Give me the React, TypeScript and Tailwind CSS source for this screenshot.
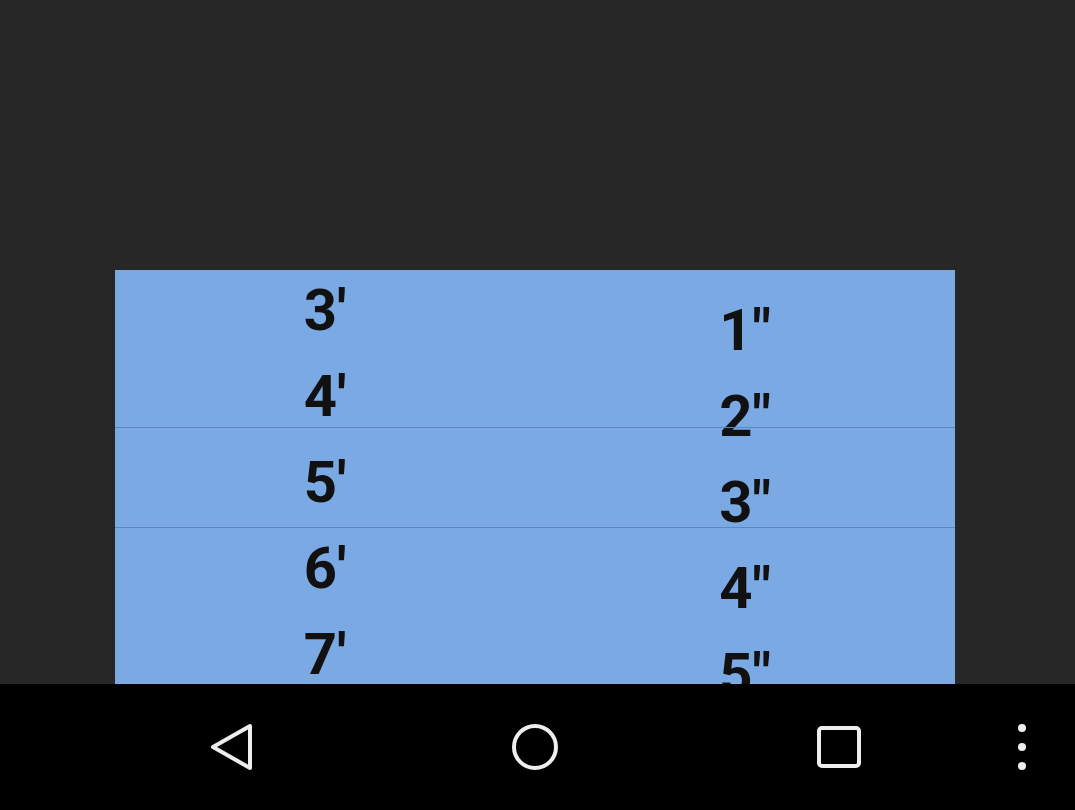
import React from "react";

const feet = ["3'", "4'", "5'", "6'", "7'"];
const inches = ['1"', '2"', '3"', '4"', '5"'];

function Column({ items, offset }: { items: string[]; offset: string }) {
  return (
    <div className={`flex flex-1 flex-col items-center ${offset}`}>
      {items.map((v) => (
        <div key={v} className="h-[86px] shrink-0 text-[58px] font-bold leading-[86px] text-[#111111]">
          {v}
        </div>
      ))}
    </div>
  );
}

export default function App() {
  return (
    <div
      className="flex h-[810px] w-full flex-col bg-[#272727]"
      style={{ fontFamily: "Roboto, 'Liberation Sans', sans-serif" }}
    >
      {/* picker area */}
      <div className="flex-1 pl-[115px] pr-[120px] pt-[270px]">
        <div className="relative flex h-[414px] overflow-hidden bg-[#7ba9e4]">
          <Column items={feet} offset="mt-[-3px]" />
          <Column items={inches} offset="mt-[17px]" />
          <div className="absolute left-0 right-0 top-[157px] h-px bg-[#5b86c0]" />
          <div className="absolute left-0 right-0 top-[257px] h-px bg-[#5b86c0]" />
        </div>
      </div>

      {/* nav bar */}
      <div className="flex h-[126px] items-center bg-black pl-[79px]">
        <div className="flex w-[304px] justify-center">
          <svg width="50" height="50" viewBox="0 0 50 50" fill="none" stroke="#eeeeee" strokeWidth="4" strokeLinejoin="round">
            <path d="M7 25 L44 4 L44 46 Z" />
          </svg>
        </div>
        <div className="flex w-[304px] justify-center">
          <svg width="50" height="50" viewBox="0 0 50 50" fill="none" stroke="#eeeeee" strokeWidth="4">
            <circle cx="25" cy="25" r="21" />
          </svg>
        </div>
        <div className="flex w-[304px] justify-center">
          <svg width="50" height="50" viewBox="0 0 50 50" fill="none" stroke="#eeeeee" strokeWidth="4">
            <rect x="5" y="6" width="40" height="38" rx="3" />
          </svg>
        </div>
        <div className="flex w-[62px] justify-center">
          <svg width="12" height="50" viewBox="0 0 12 50" fill="#eeeeee">
            <circle cx="6" cy="6" r="4" />
            <circle cx="6" cy="25" r="4" />
            <circle cx="6" cy="44" r="4" />
          </svg>
        </div>
      </div>
    </div>
  );
}
